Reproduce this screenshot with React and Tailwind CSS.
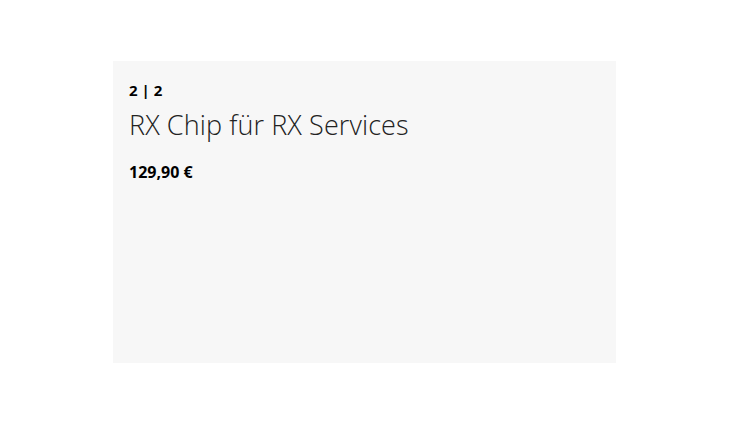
export default function App() {
  return (
    <div className="min-h-[425px] w-[730px] bg-white pt-[61px] pl-[113px] font-['Open_Sans',sans-serif] text-black">
      <div className="h-[302px] w-[503px] bg-[#f7f7f7] px-4 pt-[19px]">
        <p className="text-[15px] font-bold leading-[20px]">2 | 2</p>
        <h2 className="mt-[7px] text-[27px] font-light leading-[36px] tracking-[0.1px] text-[#222]">RX Chip für RX Services</h2>
        <p className="mt-[18px] text-[16px] font-bold leading-[22px]">129,90 €</p>
      </div>
    </div>
  )
}
